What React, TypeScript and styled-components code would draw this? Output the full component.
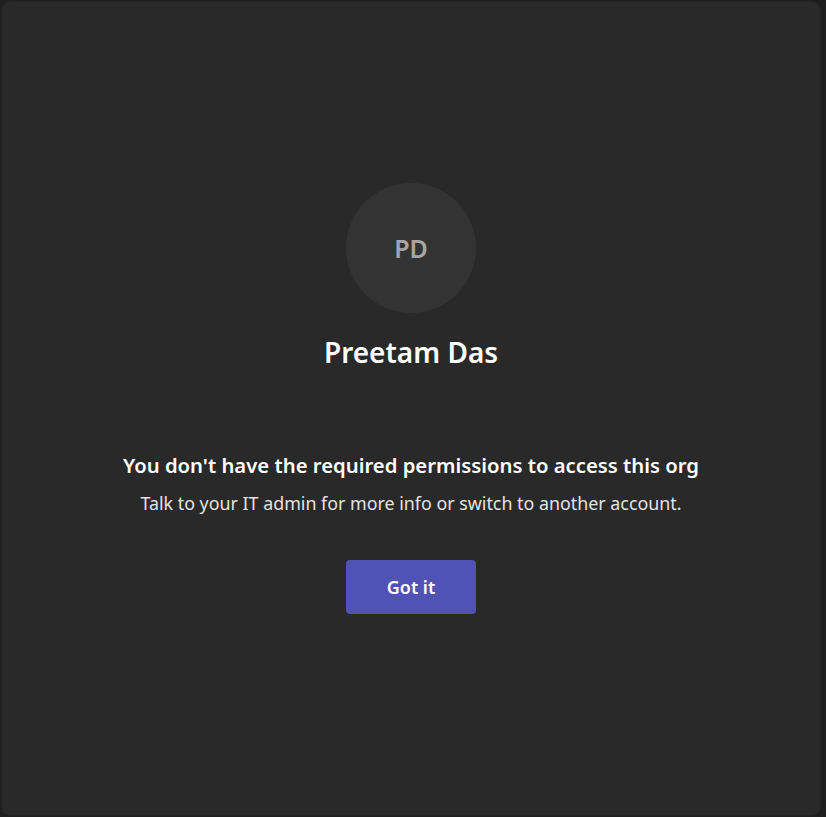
import React from "react";
import styled, { createGlobalStyle } from "styled-components";

const Global = createGlobalStyle`
  html, body { margin: 0; padding: 0; background: #1f1f1f; }
  body { font-family: "Noto Sans", "Open Sans", sans-serif; }
`;

const Screen = styled.div`
  width: 826px;
  height: 817px;
  box-sizing: border-box;
  padding: 2px 6px 2px 2px;
  display: flex;
`;

const Card = styled.div`
  flex: 1;
  background: #292929;
  border-radius: 8px;
  box-shadow: 0 0 0 1px #232323;
  display: flex;
  flex-direction: column;
  align-items: center;
  padding-top: 181px;
`;

const Avatar = styled.div`
  width: 130px;
  height: 130px;
  border-radius: 50%;
  background: #333333;
  color: #a6a6a6;
  font-size: 25px;
  font-weight: 600;
  display: flex;
  align-items: center;
  justify-content: center;
`;

const Name = styled.div`
  margin-top: 21px;
  color: #ffffff;
  font-size: 28px;
  font-weight: 600;
  line-height: 36px;
`;

const Title = styled.div`
  margin-top: 81px;
  color: #ffffff;
  font-size: 20.3px;
  font-weight: 600;
  line-height: 28px;
`;

const Subtitle = styled.div`
  margin-top: 12px;
  color: #e3e3e3;
  font-size: 17.85px;
  line-height: 24px;
`;

const Button = styled.button`
  margin-top: 45px;
  width: 130px;
  height: 54px;
  border: none;
  border-radius: 4px;
  background: #5053b5;
  color: #ffffff;
  font-family: inherit;
  font-size: 18px;
  font-weight: 600;
  cursor: pointer;
`;

export default function App() {
  return (
    <Screen>
      <Global />
      <Card>
        <Avatar>PD</Avatar>
        <Name>Preetam Das</Name>
        <Title>You don't have the required permissions to access this org</Title>
        <Subtitle>Talk to your IT admin for more info or switch to another account.</Subtitle>
        <Button>Got it</Button>
      </Card>
    </Screen>
  );
}
